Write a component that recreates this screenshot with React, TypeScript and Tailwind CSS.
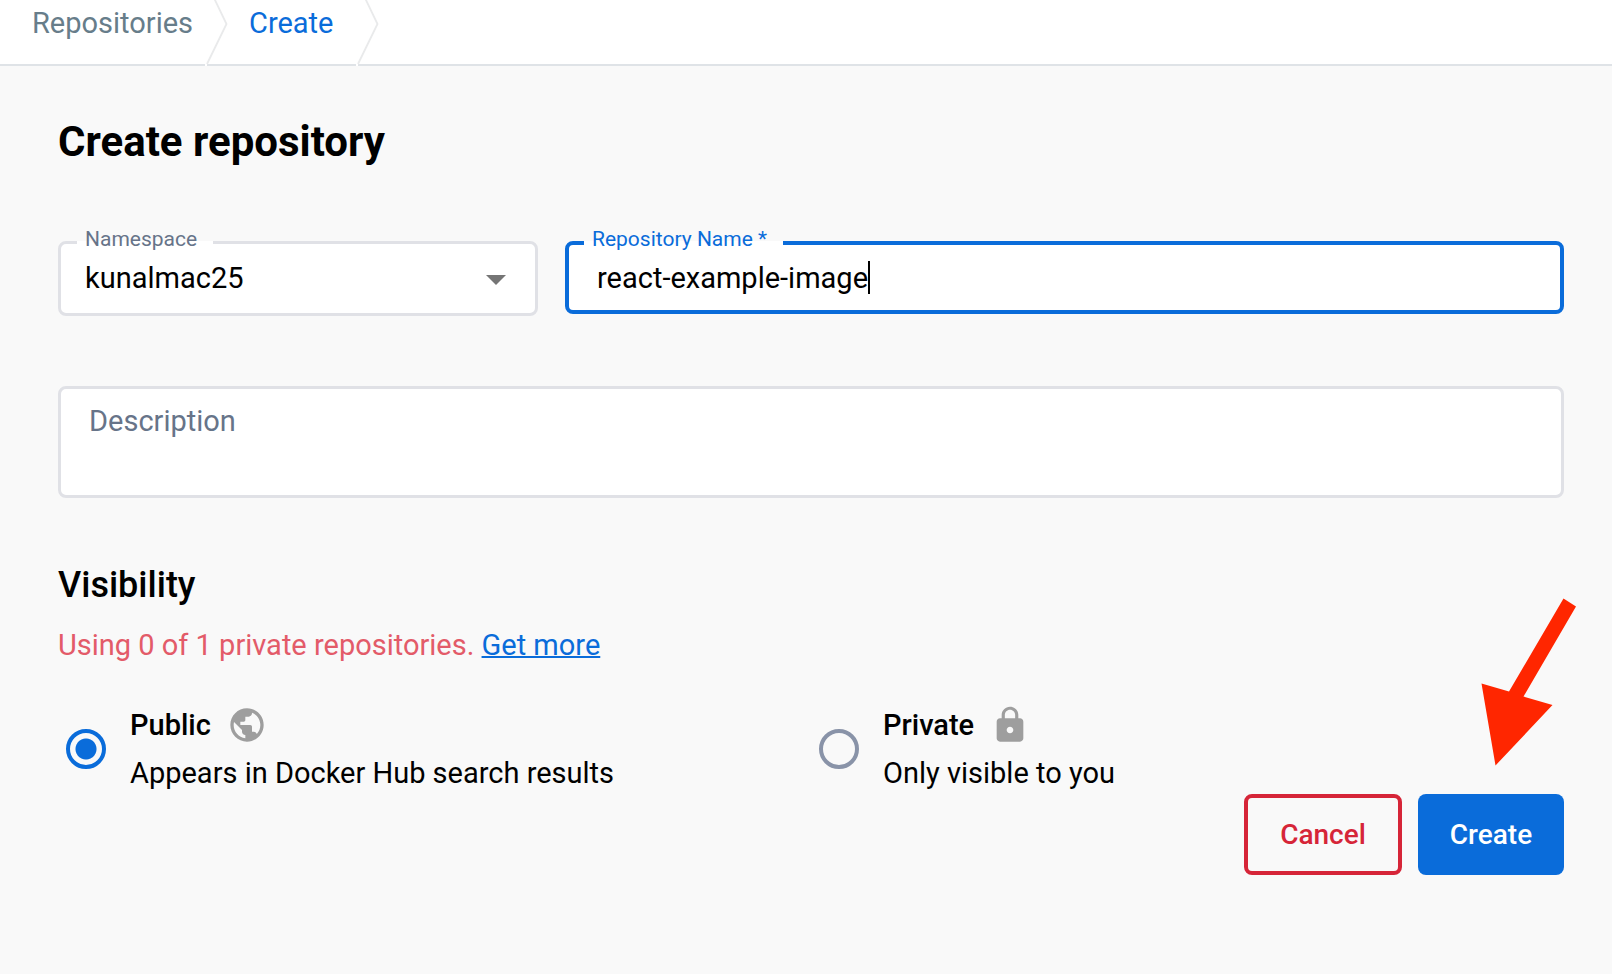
import { useState } from "react";
import { MdLock, MdPublic } from "react-icons/md";
import type { IconType } from "react-icons";

function Separator() {
  return (
    <svg aria-hidden="true" className="-mb-0.5 h-[66px] w-6 shrink-0" viewBox="0 0 24 66" fill="none">
      <path d="M0 64h2v2H0z" fill="#fff" />
      <path d="M9.5 -1 21.5 24 2 64" stroke="#e9eaeb" strokeWidth="1.8" />
    </svg>
  );
}

type VisibilityOptionProps = {
  id: string;
  title: string;
  detail: string;
  icon: IconType;
  checked: boolean;
  onSelect: () => void;
};

function VisibilityOption({ id, title, detail, icon: Icon, checked, onSelect }: VisibilityOptionProps) {
  return (
    <div className="flex items-center gap-6 pl-2">
      <input
        id={id}
        type="radio"
        name="visibility"
        checked={checked}
        onChange={onSelect}
        className="size-10 shrink-0 appearance-none rounded-full border-4 border-[#8993a8] checked:border-[#0a6cda] checked:bg-[radial-gradient(circle,#0a6cda_10px,transparent_11px)]"
      />
      <label htmlFor={id} className="flex flex-col gap-1.5 leading-[42px]">
        <span className="flex h-[42px] items-center gap-4 font-medium">
          {title}
          <Icon aria-hidden="true" className="size-10 text-[#9e9e9e]" />
        </span>
        <span>{detail}</span>
      </label>
    </div>
  );
}

export default function App() {
  const [name, setName] = useState("react-example-image");
  const [visibility, setVisibility] = useState("public");

  return (
    <div className="min-h-screen bg-[#f9f9f9] font-[Roboto,sans-serif] text-[29px] text-black">
      <header className="border-b-2 border-[#dfe3e7] bg-white">
        <nav aria-label="Breadcrumb" className="flex h-16 items-start pl-8 leading-[46px]">
          <a href="#repositories" className="w-[173px] text-[#677d8a]">
            Repositories
          </a>
          <Separator />
          <a href="#create" aria-current="page" className="ml-5 w-[107px] text-[#0a6cda]">
            Create
          </a>
          <Separator />
        </nav>
      </header>

      <main className="pt-[52px] pr-12 pb-24 pl-[58px]">
        <form onSubmit={(event) => event.preventDefault()}>
          <h1 className="text-[42px] leading-[48px] font-bold">Create repository</h1>

          <div className="mt-[75px] grid grid-cols-[480fr_999fr] items-start gap-x-[27px]">
            <div className="relative">
              <select
                id="namespace"
                defaultValue="kunalmac25"
                className="block h-[75px] w-full appearance-none rounded-lg border-3 border-[#e0e1e6] bg-white px-6 outline-none"
              >
                <option>kunalmac25</option>
              </select>
              <label
                htmlFor="namespace"
                className="absolute -top-[18px] left-[19px] bg-[linear-gradient(transparent_18px,white_18px)] pr-4 pl-2 text-[21px] leading-8 text-[#677489]"
              >
                Namespace
              </label>
              <svg aria-hidden="true" className="pointer-events-none absolute top-[34px] right-8 h-2.5 w-5" viewBox="0 0 20 10">
                <path d="M0 0h20L10 10z" fill="#757575" />
              </svg>
            </div>

            <div className="relative">
              <input
                id="repository-name"
                required
                value={name}
                onChange={(event) => setName(event.target.value)}
                className="block h-[73px] w-full rounded-lg border-4 border-[#0a6cda] bg-white px-7 caret-transparent outline-none"
              />
              <label
                htmlFor="repository-name"
                className="absolute -top-[18px] left-[19px] bg-[linear-gradient(transparent_18px,white_18px)] pr-4 pl-2 text-[21px] leading-8 text-[#0a6cda]"
              >
                Repository Name *
              </label>
              <span aria-hidden="true" className="absolute top-5 left-[303px] h-[33px] w-0.5 bg-black" />
            </div>
          </div>

          <textarea
            aria-label="Description"
            placeholder="Description"
            className="mt-[70px] block h-28 w-full resize-none rounded-lg border-3 border-[#e0e1e6] bg-white px-7 py-3.5 leading-9 outline-none placeholder:text-[#677489]"
          />

          <section aria-labelledby="visibility-heading" className="mt-[63px]">
            <h2 id="visibility-heading" className="text-4xl leading-[48px] font-medium">
              Visibility
            </h2>
            <p className="mt-[15px] leading-[42px] text-[#e35b69]">
              Using 0 of 1 private repositories.{" "}
              <a href="#plans" className="text-[#0a6cda] underline decoration-2">
                Get more
              </a>
            </p>
            <div role="radiogroup" aria-labelledby="visibility-heading" className="mt-[38px] grid grid-cols-2">
              <VisibilityOption
                id="public"
                title="Public"
                detail="Appears in Docker Hub search results"
                icon={MdPublic}
                checked={visibility === "public"}
                onSelect={() => setVisibility("public")}
              />
              <VisibilityOption
                id="private"
                title="Private"
                detail="Only visible to you"
                icon={MdLock}
                checked={visibility === "private"}
                onSelect={() => setVisibility("private")}
              />
            </div>
          </section>

          <div className="relative flex justify-end gap-4 text-[28px] font-medium">
            <button type="button" className="h-[81px] w-[158px] rounded-lg border-4 border-[#d62538] text-[#d62538]">
              Cancel
            </button>
            <button type="submit" className="h-[81px] w-[146px] rounded-lg bg-[#0a6cda] text-white">
              Create
            </button>
            <svg
              aria-hidden="true"
              className="pointer-events-none absolute -right-3 bottom-full mb-7 h-[168px] w-24"
              viewBox="0 0 96 168"
            >
              <path d="M83.5 0.5 96 8.5 43.5 98.5 72.5 107 15.5 167.5 1.5 85.5 29 93.5z" fill="#ff2600" />
            </svg>
          </div>
        </form>
      </main>
    </div>
  );
}
